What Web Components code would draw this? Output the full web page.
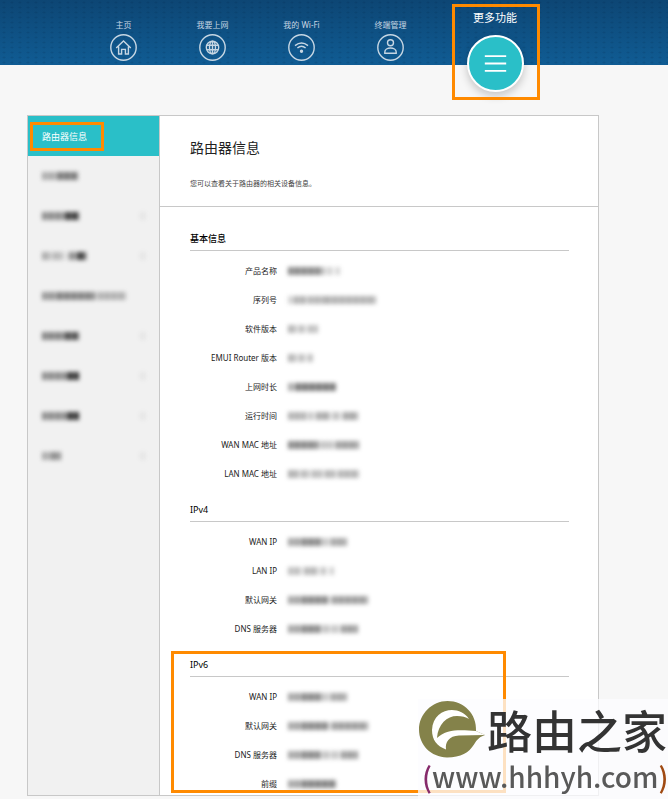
<!DOCTYPE html>
<html lang="zh-CN">
<head>
<meta charset="utf-8">
<meta name="viewport" content="width=device-width, initial-scale=1">
<title>路由器信息</title>
<style>
    body {
        margin: 0;
        background: #f7f7f7;
        color: #222;
        font-family: "Noto Sans", "Noto Sans CJK SC", sans-serif;
        font-size: 8px;
        --accent: #2abfc8;
        --line: #c8c8c8;
        --mark: #ff8a00;
    }
</style>
</head>
<body>
<top-nav>
    <nav-item label="主页">
        <svg viewBox="0 0 27 27"><circle cx="13.5" cy="13.5" r="12.7"/><path d="M6.2 14 13.5 7l7.3 7M8.6 12.4V20h3v-4.6h3.8V20h3v-7.6"/></svg>
    </nav-item>
    <nav-item label="我要上网">
        <svg viewBox="0 0 27 27"><circle cx="13.5" cy="13.5" r="12.7"/><circle cx="13.5" cy="13.5" r="6.2"/><ellipse cx="13.5" cy="13.5" rx="3" ry="6.2"/><path d="M13.5 7.3v12.4M8 11.2h11M8 15.8h11"/></svg>
    </nav-item>
    <nav-item label="我的 Wi-Fi">
        <svg viewBox="0 0 27 27"><circle cx="13.5" cy="13.5" r="12.7"/><path d="M7 11.6q6.5-5.2 13 0M9.4 14q4.1-3.4 8.2 0"/><circle cx="13.5" cy="17.3" r="1" fill="currentColor"/></svg>
    </nav-item>
    <nav-item label="终端管理">
        <svg viewBox="0 0 27 27"><circle cx="13.5" cy="13.5" r="12.7"/><circle cx="13.5" cy="8.8" r="3"/><path d="M7.8 19.3v-1.2c0-5.4 11.4-5.4 11.4 0v1.2z"/></svg>
    </nav-item>
    <nav-item label="更多功能" active>
        <svg viewBox="0 0 57 57"><path d="M17 20.5h23M17 28.5h23M17 36.5h23"/></svg>
    </nav-item>
</top-nav>

<router-panel>
    <side-item slot="menu" label="路由器信息" active></side-item>
    <side-item slot="menu" runs="16:.35,20:.6"></side-item>
    <side-item slot="menu" runs="24:.5,13:.9" arrow></side-item>
    <side-item slot="menu" runs="8:.35,3:.1,9:.3,7:.08,9:.5,8:.9" arrow></side-item>
    <side-item slot="menu" runs="16:.45,37:.55,3:.1,28:.32"></side-item>
    <side-item slot="menu" runs="24:.55,13:.8" arrow></side-item>
    <side-item slot="menu" runs="26:.5,11:.95" arrow></side-item>
    <side-item slot="menu" runs="26:.5,11:.95" arrow></side-item>
    <side-item slot="menu" runs="10:.35,9:.5" arrow></side-item>

    <page-title slot="title" heading="路由器信息">您可以查看关于路由器的相关设备信息。</page-title>

    <info-section heading="基本信息" strong>
        <info-row label="产品名称" runs="32:.55,5:.3,3:.1,4:.22,4:.05,4:.2"></info-row>
        <info-row label="序列号" runs="6:.2,12:.36,2:.12,18:.34,50:.36"></info-row>
        <info-row label="软件版本" runs="8:.35,3:.1,6:.3,3:.08,10:.3"></info-row>
        <info-row label="EMUI Router 版本" runs="8:.35,3:.1,6:.3,3:.08,5:.3"></info-row>
        <info-row label="上网时长" runs="8:.38,40:.62"></info-row>
        <info-row label="运行时间" runs="18:.36,3:.12,4:.28,3:.08,14:.4,3:.08,7:.3,3:.08,15:.42"></info-row>
        <info-row label="WAN MAC 地址" runs="30:.55,4:.2,10:.28,4:.18,23:.45"></info-row>
        <info-row label="LAN MAC 地址" runs="10:.38,3:.12,8:.32,3:.1,10:.32,3:.1,10:.35,3:.1,21:.35"></info-row>
    </info-section>
    <info-section heading="IPv4">
        <info-row label="WAN IP" runs="14:.42,18:.55,8:.28,3:.15,16:.42"></info-row>
        <info-row label="LAN IP" runs="13:.3,3:.06,14:.34,3:.06,5:.28,4:.05,4:.22"></info-row>
        <info-row label="默认网关" runs="14:.42,26:.55,4:.14,36:.46"></info-row>
        <info-row label="DNS 服务器" runs="14:.42,18:.55,4:.2,4:.28,5:.18,5:.28,3:.1,17:.46"></info-row>
    </info-section>
    <info-section heading="IPv6" marked>
        <info-row label="WAN IP" runs="14:.42,18:.55,8:.28,3:.15,16:.42"></info-row>
        <info-row label="默认网关" runs="14:.42,26:.55,4:.14,36:.46"></info-row>
        <info-row label="DNS 服务器" runs="14:.42,18:.55,4:.2,4:.28,5:.18,5:.28,3:.1,17:.46"></info-row>
        <info-row label="前缀" runs="14:.42,34:.58"></info-row>
    </info-section>
</router-panel>

<site-stamp></site-stamp>

<script>
(function () {
    function attach(el, html) {
        let template = document.createElement("template");
        template.innerHTML = html;
        let root = el.attachShadow({ mode: "open" });
        root.appendChild(template.content.cloneNode(true));
        return root;
    }

    // a masked value: soft grey runs given as "width:alpha,width:alpha"
    class MaskedText extends HTMLElement {
        constructor() {
            super();
            let runs = (this.getAttribute("runs") || "").split(",").map(function (run) {
                let parts = run.split(":");
                return `<i style="width:${parts[0]}px;opacity:${parts[1]}"></i>`;
            }).join("");
            attach(this, `
                <style>
                    :host {
                        display: flex;
                        align-items: center;
                        filter: blur(2px);
                    }
                    i {
                        height: 8px;
                        background: repeating-linear-gradient(90deg, #222 0 4px, #555 4px 7px);
                    }
                </style>
                ${runs}
            `);
        }
    }

    class TopNav extends HTMLElement {
        constructor() {
            super();
            attach(this, `
                <style>
                    :host {
                        display: block;
                        height: 65px;
                        background:
                            radial-gradient(ellipse at center, rgba(0,20,50,.12) 0 1px, transparent 2px) 0 0 / 8px 5px,
                            linear-gradient(#0d4674, #105c94);
                    }
                    nav {
                        display: grid;
                        grid-template-columns: repeat(4, 89px) 120px;
                        padding-left: 79px;
                    }
                </style>
                <nav><slot></slot></nav>
            `);
        }
    }

    class NavItem extends HTMLElement {
        constructor() {
            super();
            attach(this, `
                <style>
                    :host {
                        display: flex;
                        justify-content: center;
                    }
                    a {
                        display: flex;
                        flex-direction: column;
                        align-items: center;
                        gap: 3px;
                        padding-top: 19px;
                        color: #c6d6e3;
                        line-height: 12px;
                        text-decoration: none;
                        white-space: nowrap;
                    }
                    ::slotted(svg) {
                        display: block;
                        width: 27px;
                        height: 27px;
                        fill: none;
                        stroke: currentColor;
                        stroke-width: 1.4;
                    }
                    :host([active]) a {
                        position: relative;
                        box-sizing: border-box;
                        width: 88px;
                        gap: 9px;
                        padding-top: 10px;
                        color: #fff;
                        font-size: 11px;
                        line-height: 16px;
                    }
                    :host([active]) a::after {
                        content: "";
                        position: absolute;
                        inset: 4px -1px -8px 1px;
                        border: 3px solid var(--mark);
                    }
                    :host([active]) ::slotted(svg) {
                        box-sizing: border-box;
                        width: 57px;
                        height: 57px;
                        border: 2px solid #fff;
                        border-radius: 50%;
                        background: var(--accent);
                        box-shadow: 0 4px 8px rgba(0,0,0,.2);
                        stroke-width: 2;
                    }
                </style>
                <a href="#">${this.getAttribute("label")}<slot></slot></a>
            `);
            if (this.hasAttribute("active")) {
                this.shadowRoot.querySelector("a").setAttribute("aria-current", "page");
            }
        }
    }

    class RouterPanel extends HTMLElement {
        constructor() {
            super();
            attach(this, `
                <style>
                    :host {
                        display: grid;
                        grid-template-columns: 131px 1fr;
                        margin: 50px 69px 3px 27px;
                        border: 1px solid var(--line);
                        background: #fff;
                    }
                    aside {
                        background: #f1f1f1;
                        border-right: 1px solid var(--line);
                        margin-right: -1px;
                    }
                    main {
                        margin-left: 1px;
                    }
                    .body {
                        padding: 1px 29px 6px 30px;
                    }
                </style>
                <aside><slot name="menu"></slot></aside>
                <main>
                    <slot name="title"></slot>
                    <div class="body"><slot></slot></div>
                </main>
            `);
        }
    }

    class SideItem extends HTMLElement {
        constructor() {
            super();
            let label = this.getAttribute("label");
            let runs = this.getAttribute("runs");
            attach(this, `
                <style>
                    :host {
                        display: block;
                    }
                    a {
                        position: relative;
                        display: flex;
                        align-items: center;
                        justify-content: space-between;
                        height: 40px;
                        padding: 0 13px 0 14px;
                        color: inherit;
                        font-size: 9px;
                        text-decoration: none;
                    }
                    :host([active]) a {
                        background: var(--accent);
                        color: #fff;
                    }
                    :host([active]) a::after {
                        content: "";
                        position: absolute;
                        left: 2px;
                        top: 6px;
                        width: 68px;
                        height: 23px;
                        border: 3px solid var(--mark);
                    }
                </style>
                <a href="#">
                    ${label || `<masked-text runs="${runs}"></masked-text>`}
                    ${this.hasAttribute("arrow") ? `<masked-text runs="6:.06"></masked-text>` : ""}
                </a>
            `);
        }
    }

    class PageTitle extends HTMLElement {
        constructor() {
            super();
            attach(this, `
                <style>
                    :host {
                        display: block;
                        padding: 22px 30px 16px;
                        border-bottom: 1px solid var(--line);
                    }
                    h1 {
                        margin: 0 0 20px;
                        font-size: 14px;
                        font-weight: 400;
                        line-height: 20px;
                    }
                    p {
                        margin: 0;
                        color: #444;
                        font-size: 7px;
                        line-height: 12px;
                    }
                </style>
                <h1>${this.getAttribute("heading")}</h1>
                <p><slot></slot></p>
            `);
        }
    }

    class InfoSection extends HTMLElement {
        constructor() {
            super();
            attach(this, `
                <style>
                    :host {
                        display: block;
                        position: relative;
                    }
                    h2 {
                        margin: 0;
                        padding-top: 20px;
                        border-bottom: 1px solid var(--line);
                        color: #000;
                        font-size: 9px;
                        font-weight: 400;
                        line-height: 22px;
                    }
                    :host([strong]) h2 {
                        font-weight: 500;
                    }
                    .rows {
                        display: grid;
                        gap: 18px;
                        padding-top: 14px;
                    }
                    :host([marked])::after {
                        content: "";
                        position: absolute;
                        left: -19px;
                        top: 17px;
                        width: 329px;
                        height: 136px;
                        border: 3px solid var(--mark);
                        pointer-events: none;
                    }
                </style>
                <h2>${this.getAttribute("heading")}</h2>
                <div class="rows"><slot></slot></div>
            `);
        }
    }

    class InfoRow extends HTMLElement {
        constructor() {
            super();
            attach(this, `
                <style>
                    :host {
                        display: grid;
                        grid-template-columns: 87px 1fr;
                        column-gap: 11px;
                        height: 11px;
                        line-height: 11px;
                    }
                    span {
                        text-align: right;
                        white-space: nowrap;
                    }
                </style>
                <span>${this.getAttribute("label")}</span>
                <masked-text runs="${this.getAttribute("runs")}"></masked-text>
            `);
        }
    }

    // site stamp that floats over the lower right corner
    class SiteStamp extends HTMLElement {
        constructor() {
            super();
            attach(this, `
                <style>
                    :host {
                        position: fixed;
                        right: 0;
                        bottom: 0;
                        box-sizing: border-box;
                        width: 250px;
                        height: 100px;
                        background: rgba(253,253,255,.76);
                        color: #333;
                        font-family: "Noto Sans CJK SC", sans-serif;
                        white-space: nowrap;
                    }
                    .brand {
                        display: flex;
                        align-items: center;
                        gap: 2px;
                        height: 60px;
                        padding-left: 1px;
                        font-size: 45px;
                        font-weight: 500;
                        line-height: 45px;
                    }
                    svg {
                        flex: none;
                        width: 66px;
                        height: 57px;
                    }
                    .url {
                        padding-left: 4px;
                        color: #595959;
                        font-size: 28px;
                        font-weight: 500;
                        line-height: 34px;
                    }
                    .open { color: #862a6b; }
                    .close { color: #a04a12; }
                </style>
                <div class="brand">
                    <svg viewBox="0 0 66 57"><path fill="#84824a" d="M57 30C58 13 45 0 28.500 0 13 0 0 13 0 28.500 0 44 12 56 28 56.500c14 0 22-5 27-13 3-5 6-8 11-9.500z"/><path fill="#fff" d="M50 18C40 3 14 7 13 29c0 10 5 16 14 19.500C26 41 30 35 40 34.500L66 34l-9-4C44 29 28 27 18 37c1-14 10-22 20-22 5 0 9 1 12 3z"/></svg>
                    <span>路由之家</span>
                </div>
                <div class="url"><span class="open">(</span>www.hhhyh.com<span class="close">)</span></div>
            `);
        }
    }

    customElements.define("masked-text", MaskedText);
    customElements.define("top-nav", TopNav);
    customElements.define("nav-item", NavItem);
    customElements.define("router-panel", RouterPanel);
    customElements.define("side-item", SideItem);
    customElements.define("page-title", PageTitle);
    customElements.define("info-section", InfoSection);
    customElements.define("info-row", InfoRow);
    customElements.define("site-stamp", SiteStamp);
})();
</script>
</body>
</html>
